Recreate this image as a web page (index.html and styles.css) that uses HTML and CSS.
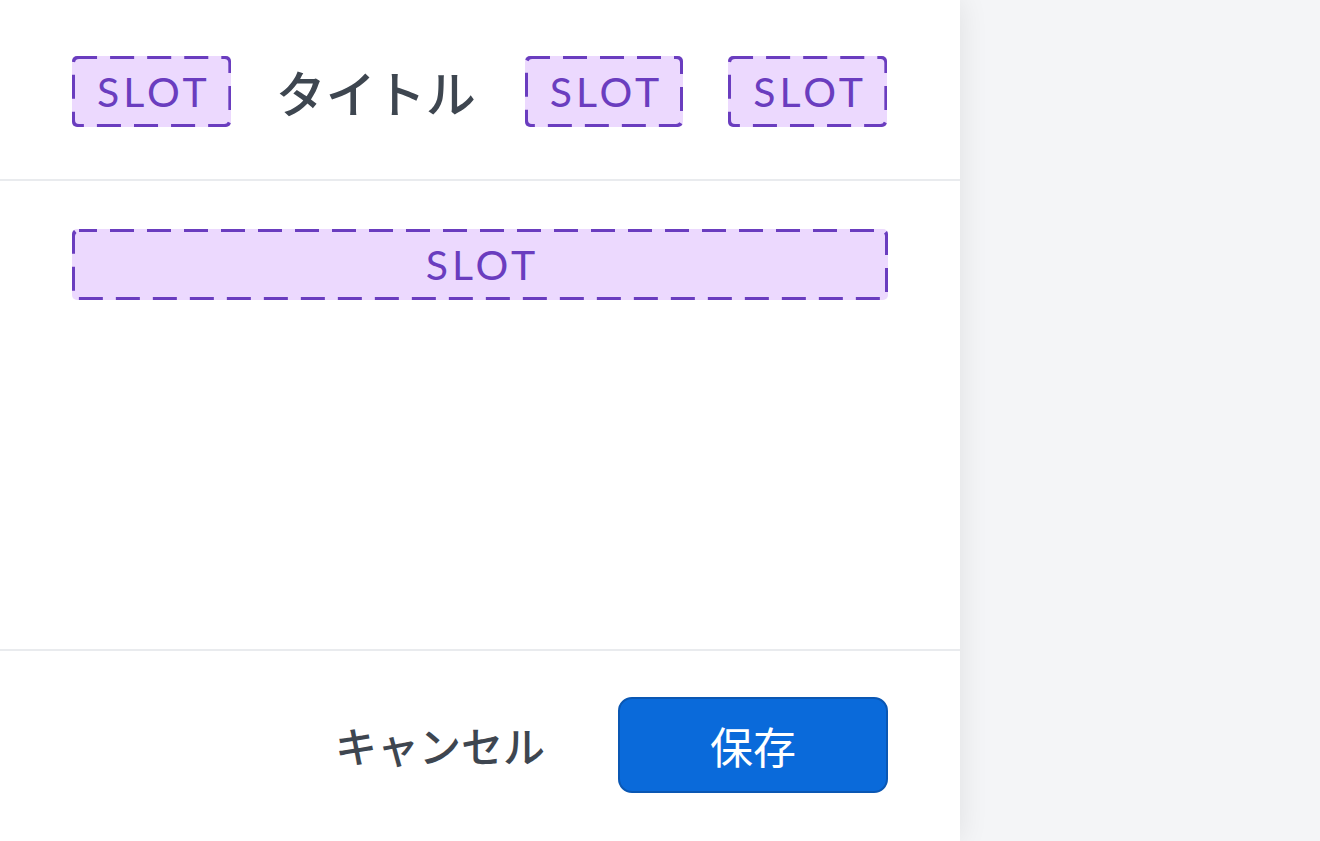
FILE: index.html
```html
<!DOCTYPE html>
<html lang="ja">
<head>
    <meta charset="UTF-8">
    <meta name="viewport" content="width=device-width, initial-scale=1.0">
    <title>パネル</title>
    <link rel="stylesheet" href="styles.css">
</head>
<body>
    <div class="panel">
        <!-- ヘッダー -->
        <div class="panel-header">
            <div class="slot">SLOT</div>
            <h2 class="panel-title">タイトル</h2>
            <div class="slot">SLOT</div>
            <div class="slot">SLOT</div>
        </div>

        <!-- 本文 -->
        <div class="panel-body">
            <div class="slot slot-wide">SLOT</div>
        </div>

        <!-- フッター -->
        <div class="panel-footer">
            <button class="btn btn-neutral">キャンセル</button>
            <button class="btn btn-brand">保存</button>
        </div>
    </div>
</body>
</html>
```

FILE: styles.css
```css
* {
    box-sizing: border-box;
    margin: 0;
    padding: 0;
}

body {
    font-family: Lato, "Noto Sans CJK JP", sans-serif;
    background-color: #f4f5f7;
    height: 100vh;
    overflow: hidden;
}

.panel {
    width: 960px;
    height: 100%;
    background: white;
    display: flex;
    flex-direction: column;
    box-shadow: 0 0 28px rgba(0,0,0,0.09);
}

.panel-header {
    display: flex;
    align-items: flex-start;
    gap: 45px;
    height: 181px;
    padding: 56px 72px 0;
    border-bottom: 2px solid #e9ebee;
}

.panel-title {
    font-family: "Noto Sans CJK JP", sans-serif;
    font-size: 50px;
    font-weight: 500;
    color: #3e4650;
    line-height: 71px;
    white-space: nowrap;
    flex-shrink: 0;
    margin-right: 4px;
}

.slot {
    flex-shrink: 0;
    height: 71px;
    padding: 0 20px 0 25px;
    display: flex;
    align-items: center;
    justify-content: center;
    font-family: Lato, sans-serif;
    font-size: 41px;
    letter-spacing: 4px;
    color: #6a3dbf;
    background-color: #ecd9fe;
    background-image: url("data:image/svg+xml,%3Csvg xmlns='http://www.w3.org/2000/svg'%3E%3Crect width='100%25' height='100%25' rx='7' ry='7' fill='none' stroke='%236a3dbf' stroke-width='6' stroke-dasharray='24 13' stroke-dashoffset='6'/%3E%3C/svg%3E");
    border-radius: 5px;
}

.panel-body {
    flex: 1;
    padding: 48px 72px;
}

.slot-wide {
    width: 100%;
}

.panel-footer {
    display: flex;
    justify-content: flex-end;
    align-items: center;
    gap: 73px;
    padding: 46px 72px 48px;
    border-top: 2px solid #e9ebee;
}

.btn {
    font-family: "Noto Sans CJK JP", sans-serif;
    font-size: 43px;
    border: none;
    background: none;
    line-height: 1;
}

.btn-neutral {
    font-size: 42px;
    font-weight: 500;
    color: #3e4650;
}

.btn-brand {
    width: 270px;
    height: 96px;
    color: white;
    background: #0a6ada;
    border: 2px solid #0a57b3;
    border-radius: 14px;
}
```
